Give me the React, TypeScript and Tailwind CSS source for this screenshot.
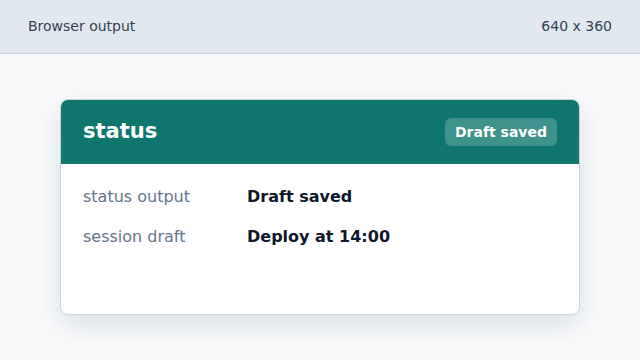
export default function App() {
  const rows = [
    { label: "status output", value: "Draft saved" },
    { label: "session draft", value: "Deploy at 14:00" },
  ];

  return (
    <div
      className="w-[640px] h-[360px] flex flex-col bg-[#f8fafc]"
      style={{ fontFamily: '"DejaVu Sans", sans-serif' }}
    >
      {/* TOP BAR */}
      <div className="h-[54px] shrink-0 flex items-center justify-between px-7 bg-[#e2e8f0] border-b border-[#cbd5e1] text-[14px] text-[#334155]">
        <span>Browser output</span>
        <span>640 x 360</span>
      </div>

      <div className="flex-1 flex items-center justify-center">
        {/* CARD */}
        <div className="w-[520px] h-[216px] flex flex-col bg-white border border-[#cbd5e1] rounded-lg overflow-hidden shadow-[0_10px_30px_rgba(15,23,42,0.12)]">
          <div className="h-[64px] shrink-0 flex items-center justify-between px-[21px] bg-[#0f766e]">
            <h1 className="text-[21px] font-bold text-white ml-px">status</h1>
            <span className="px-[10px] h-[28px] flex items-center rounded-md bg-white/20 text-white text-[14px] font-bold mr-px">
              Draft saved
            </span>
          </div>

          <div className="flex flex-col gap-5 px-[22px] pt-[23px]">
            {rows.map((r) => (
              <div key={r.label} className="flex items-center text-[16px] leading-5">
                <div className="w-[164px] text-[#64748b]">{r.label}</div>
                <div className="font-bold text-[#0f172a]">{r.value}</div>
              </div>
            ))}
          </div>
        </div>
      </div>
    </div>
  );
}
